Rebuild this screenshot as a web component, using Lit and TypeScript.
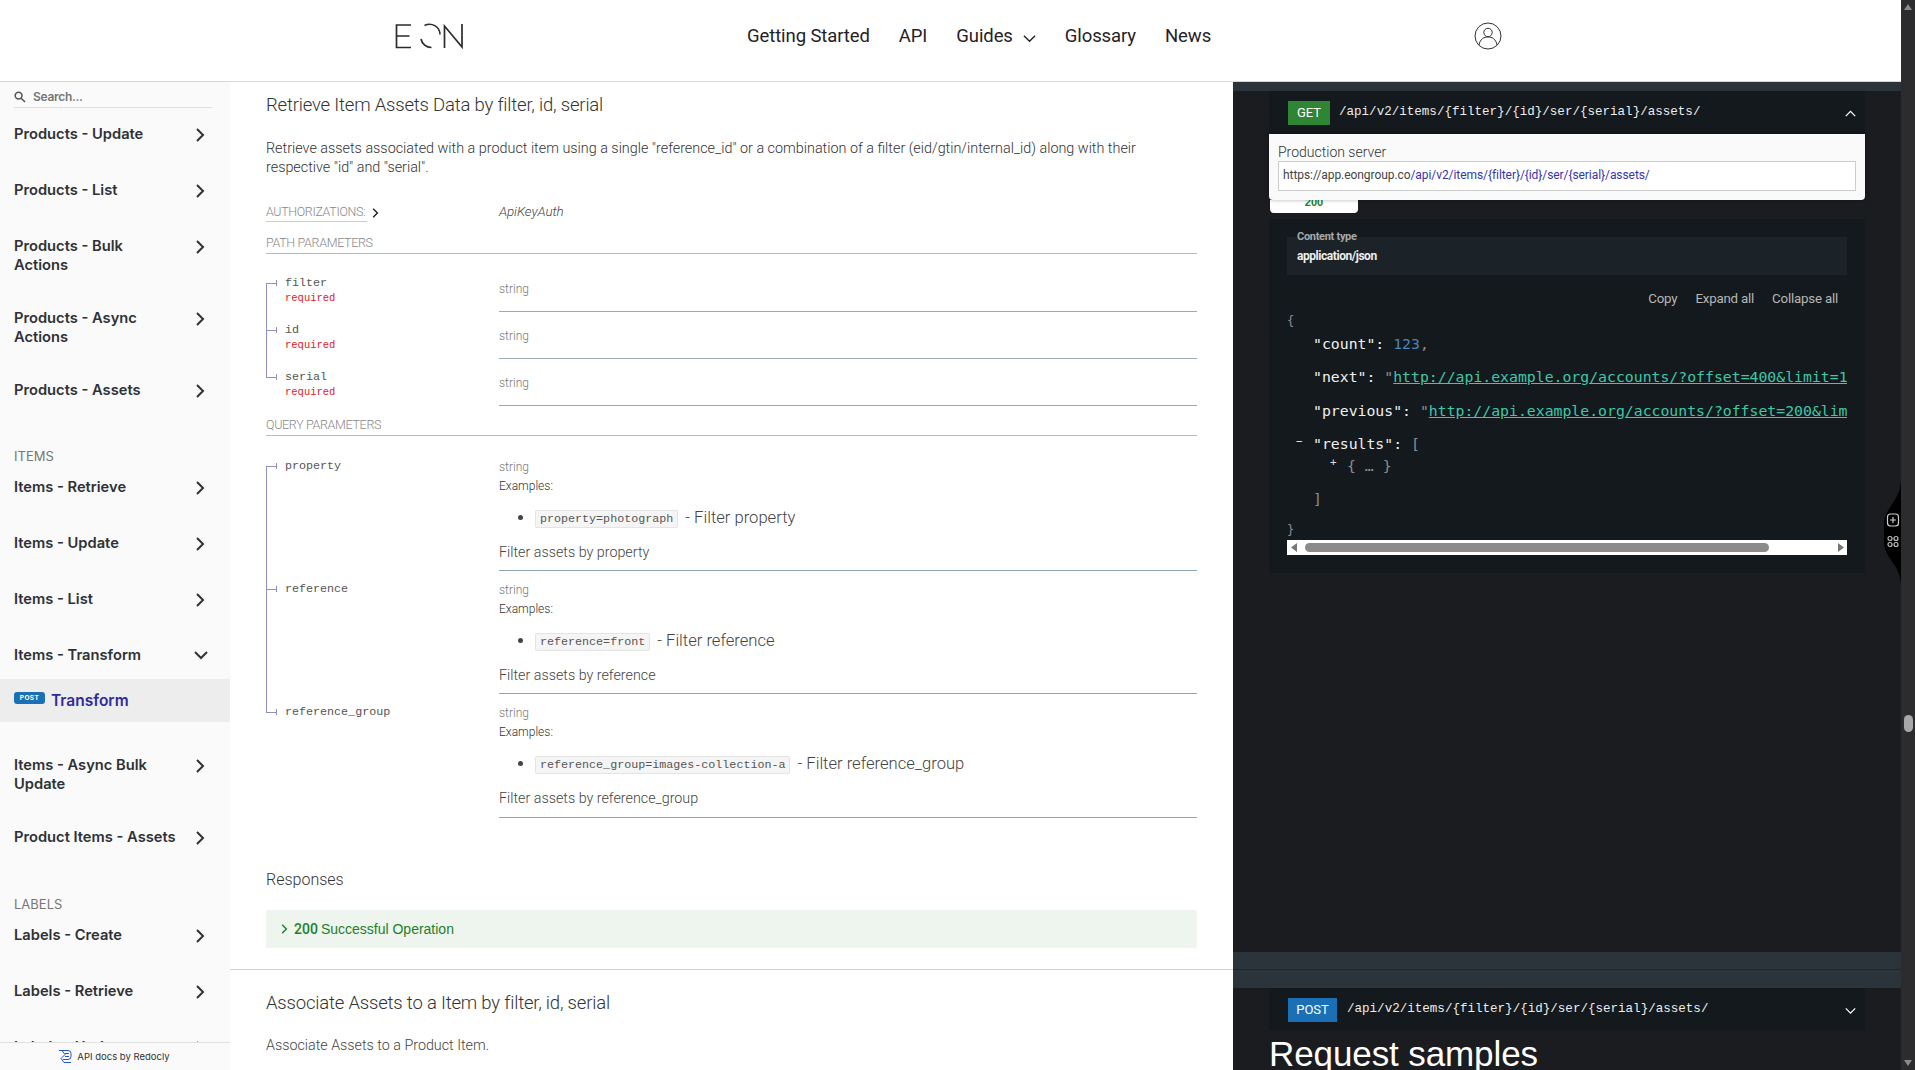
import { LitElement, html, css } from "lit";
import { customElement } from "lit/decorators.js";

type Nav = { kind: "item"; lines: string[]; open?: boolean } | { kind: "label"; text: string; cls?: string } | { kind: "active" };

const NAV: Nav[] = [
  { kind: "item", lines: ["Products - Update"] },
  { kind: "item", lines: ["Products - List"] },
  { kind: "item", lines: ["Products - Bulk", "Actions"] },
  { kind: "item", lines: ["Products - Async", "Actions"] },
  { kind: "item", lines: ["Products - Assets"] },
  { kind: "label", text: "ITEMS" },
  { kind: "item", lines: ["Items - Retrieve"] },
  { kind: "item", lines: ["Items - Update"] },
  { kind: "item", lines: ["Items - List"] },
  { kind: "item", lines: ["Items - Transform"], open: true },
  { kind: "active" },
  { kind: "item", lines: ["Items - Async Bulk", "Update"] },
  { kind: "item", lines: ["Product Items - Assets"] },
  { kind: "label", text: "LABELS", cls: "tall" },
  { kind: "item", lines: ["Labels - Create"] },
  { kind: "item", lines: ["Labels - Retrieve"] },
  { kind: "item", lines: ["Labels - Update"] },
];

const PATH_PARAMS = ["filter", "id", "serial"];
const QUERY_PARAMS = [
  { name: "property", ex: "property=photograph", label: "Filter property", desc: "Filter assets by property" },
  { name: "reference", ex: "reference=front", label: "Filter reference", desc: "Filter assets by reference" },
  { name: "reference_group", ex: "reference_group=images-collection-a", label: "Filter reference_group", desc: "Filter assets by reference_group" },
];

const chevron = (dir: "right" | "down" | "up", cls = "") => {
  const d = dir === "right" ? "M3 1l6 6-6 6" : dir === "down" ? "M1 3l6 6 6-6" : "M1 9l6-6 6 6";
  return html`<svg class="chev ${cls}" viewBox="0 0 14 14" fill="none" stroke="currentColor"><path d=${d}></path></svg>`;
};

@customElement("app-root")
export class AppRoot extends LitElement {
  static styles = css`
    :host { display: block; width: 1915px; height: 1070px; overflow: hidden; position: relative; background: #fff;
      font-family: Roboto, "Liberation Sans", sans-serif; color: #333; }
    * { box-sizing: border-box; }
    .page { display: flex; flex-direction: column; height: 1070px; width: 1901px; }
    header { height: 82px; flex: none; border-bottom: 1px solid #d8d8d8; display: flex; align-items: center; padding: 0 0 15px 395px; background: #fff; }
    .logo { width: 69px; height: 26px; flex: none; margin-top: 6px; }
    nav { display: flex; align-items: center; margin-left: 283px; font-size: 18.5px; letter-spacing: -0.1px; color: #1f2226; margin-top: 6px; }
    nav a { margin-right: 29px; display: flex; align-items: center; }
    nav .g-chev { width: 13px; height: 13px; margin-left: 10px; margin-top: 7px; stroke-width: 1.5; }
    .user { width: 28px; height: 28px; margin-left: 234px; margin-top: 6px; flex: none; }
    .body { display: flex; flex: 1; min-height: 0; }

    aside { width: 230px; flex: none; background: #fafafa; position: relative; overflow: hidden; font-family: Inter, "Liberation Sans", sans-serif; }
    .search { margin: 0 18px 10px 14px; height: 26px; border-bottom: 1px solid #e0e0e0; display: flex; align-items: center; padding-top: 4px; font-size: 12px; font-weight: 600; color: #777; }
    .search svg { width: 12px; height: 12px; margin-right: 7px; }
    .search span { letter-spacing: -0.3px; }
    .item { min-height: 56px; padding: 6.5px 14px 26.5px; display: flex; justify-content: space-between; font-size: 14.7px; font-weight: 600; line-height: 19.5px; color: #2e3136; }
    .item.open { min-height: 40px; padding-bottom: 0; height: 40px; }
    .item .chev { width: 14px; height: 14px; margin: 3.5px 8px 0 0; stroke-width: 2; flex: none; }
    .label { height: 41px; padding: 18px 14px 0; line-height: 17px; font-size: 13px; color: #777; }
    .label.tall { height: 42px; padding-top: 19px; }
    .active { height: 43px; margin-bottom: 27px; background: #ededed; display: flex; align-items: flex-start; padding: 13px 0 0 14px; }
    .post { width: 31px; height: 12px; border-radius: 3px; background: #1a6fb5; color: #fff; font-size: 6.5px; font-weight: 700; text-align: center; line-height: 12px; letter-spacing: .4px; }
    .active b { color: #2f2a9e; font-size: 15.5px; font-weight: 600; margin-left: 6px; line-height: 18px; }
    .foot { position: absolute; left: 0; right: 0; bottom: 0; height: 28px; background: #fafafa; border-top: 1px solid #e2e2e2; display: flex; align-items: center; justify-content: center; font-size: 9.5px; color: #333; padding-right: 2px; }
    .foot svg { width: 15px; height: 15px; margin-right: 4px; }

    main { width: 1003px; flex: none; padding: 0 36px; overflow: hidden; font-weight: 300; }
    h2 { font-weight: 300; font-size: 18.5px; margin: 0; line-height: 24px; color: #333; letter-spacing: -.19px; }
    main > h2:first-child { padding-top: 11px; height: 35px; }
    .desc { font-size: 14.36px; line-height: 19px; margin: 22px 0 0; color: #333; }
    .auth { display: flex; margin-top: 26px; height: 31px; font-size: 12.4px; color: #888; align-items: flex-start; line-height: 18px; letter-spacing: -.3px;}
    .auth u { text-decoration: none; width: 101px; height: 19px; border-bottom: 1px solid #ccc; display: block; white-space: nowrap; }
    .auth .chev { width: 10px; height: 10px; margin: 5px 0 0 4px; color: #222; stroke-width: 2; }
    .auth i { margin-left: 118px; color: #444; font-size: 13.4px; letter-spacing: -.1px; }
    .sect { font-size: 12.5px; color: #888; border-bottom: 1px solid #bbb; height: 20px; line-height: 18px; letter-spacing: -.33px; }
    .s-path { margin: 0 0 11px; }
    .s-query { margin: 10px 0 12px; }
    .row { display: flex; }
    .pname { width: 233px; flex: none; position: relative; padding: 10px 0 0 19px; font: 11.7px/16px "Liberation Mono", monospace; color: #555; }
    .pname::before { content: ""; position: absolute; left: 0; top: 0; bottom: 0; width: 1px; background: #8f8fc4; }
    .row:first-child .pname::before { top: 18px; }
    .row:last-child .pname::before { bottom: auto; height: 18px; }
    .pname::after { content: ""; position: absolute; left: 0; top: 15px; width: 10px; height: 6px; border-right: 1px solid #8f8fc4; background: linear-gradient(#8f8fc4, #8f8fc4) 0 3px / 100% 1px no-repeat; }
    .req { display: block; color: #e0202a; font-size: 10.5px; line-height: 15px; }
    .pval { flex: 1; border-bottom: 1px solid #9aa8b8; font-size: 12px; color: #444; }
    .pt .pval { height: 47px; padding-top: 16px; line-height: 16px; color: #777; }
    .q .pval { height: 123.2px; padding-top: 11px; border-bottom-color: #8fa5b5; }
    .q .pval .t { line-height: 16px; color: #777; }
    .q .pval .e { line-height: 22px; color: #333; }
    .q ul { margin: 9px 0 12px; padding: 0 0 0 36px; height: 24px; font-size: 16.6px; color: #444; line-height: 24px; }
    code { font: 11.7px "Liberation Mono", monospace; color: #555; background: #f5f5f5; border: 1px solid #e4e4e4; border-radius: 2px; padding: 1px 4px; margin-right: 3px; vertical-align: 1px; }
    .q .d { font-size: 14.3px; line-height: 20px; color: #444; }
    h3 { font-weight: 300; font-size: 16px; margin: 52.4px 0 0; line-height: 20px; color: #333; }
    .resp { margin-top: 20px; height: 38px; background: #eef5ef; border-radius: 2px; display: flex; align-items: center; padding-left: 14px; color: #1d8127; font: 14px "Liberation Sans", sans-serif; }
    .resp .chev { width: 10px; height: 12px; margin-right: 4px; stroke-width: 2; }
    .resp b { margin-right: 3px; font-family: Roboto, sans-serif; font-weight: 500; }
    .rule { height: 1px; background: #d0d0d0; margin: 21px -36px 0; }
    .assoc { margin-top: 21px; }
    .assoc + p { font-size: 14.3px; margin: 20px 0 0; line-height: 20px; color: #444; }

    .dark { flex: 1; background: #1b1c1f; position: relative; overflow: hidden; color: #fff; }
    .band { height: 9px; background: #2b343a; }
    .bar { margin: 0 36px; background: #14191d; display: flex; align-items: flex-start; padding: 10px 0 0 19px; height: 43px; font: 12.56px/22px "Liberation Mono", monospace; color: #eee; }
    .bar.p { height: 42px; }
    .badge { height: 24px; font: 13px/24px Roboto, sans-serif; text-align: center; color: #fff; margin-right: 9px; }
    .badge.get { width: 42px; background: #2e8533; }
    .badge.postb { width: 49px; background: #1a6fb5; margin-right: 10px; }
    .bar .path { flex: 1; }
    .bar .chev { width: 11px; height: 11px; margin: 8px 9px 0 0; stroke-width: 1.6; color: #fff; }
    .tabs { height: 85px; position: relative; padding: 66px 0 0 37px; }
    .tab { width: 88px; height: 13px; background: #fff; border-radius: 0 0 4px 4px; color: #1d8127; text-align: center; font: 700 11px/5px "Liberation Sans", sans-serif; overflow: hidden; padding-top: 0; }
    .server { position: absolute; left: 36px; top: 0; width: 596px; height: 66px; background: #fafafa; border-radius: 0 0 4px 4px; padding: 9px 9px 0; color: #333; z-index: 2; box-shadow: 0 0 4px rgba(0,0,0,.3); font-size: 14px; line-height: 18px; font-weight: 300; }
    .server div { height: 30px; margin-top: 0; border: 1px solid #ccc; background: #fff; padding-left: 4px; font-size: 12px; line-height: 27px; color: #444; letter-spacing: -.07px; white-space: nowrap; font-weight: 400; }
    .server span { color: #3535b0; }
    .samples { margin: 0 36px; height: 354px; background: #14191d; padding: 18px 18px 0; position: relative; }
    .ctype { height: 38px; background: #1c2328; position: relative; padding: 11px 10px 0; font: 700 12px/16px Roboto, sans-serif; color: #eee; letter-spacing: -.45px; }
    .ctype small { position: absolute; left: 10px; top: -7px; font-size: 11px; line-height: 14px; color: #a5a9ac; letter-spacing: -.3px; }
    .tools { display: flex; justify-content: flex-end; gap: 18px; margin-top: 15px; padding-right: 9px; height: 18px; font: 13.3px/18px Roboto, sans-serif; color: #b4b6b8; letter-spacing: -.2px; }
    .json { margin-top: 3px; height: 229px; width: 560px; overflow: hidden; font: 14.8px/20px "DejaVu Sans Mono", monospace; color: #f0f0f0; }
    .jl { white-space: nowrap; position: relative; }
    .json a { color: #3fc8a8; text-decoration: underline; }
    .json .n { color: #4a85b8; }
    .json .g { color: #8c8f92; }
    .json .pm { position: absolute; font-size: 11px; color: #ddd; }
    .json .sm { font-size: 12px; }
    .hs { height: 15px; width: 560px; background: #fff; position: relative; display: flex; align-items: center; padding-left: 18px; }
    .hs i { display: block; width: 464px; height: 9px; background: #8b8b8b; border-radius: 5px; }
    .hs svg { position: absolute; top: 3px; width: 8px; height: 9px; fill: #777; }
    .lower { margin-top: 379px; height: 36px; background: #2b343a; position: relative; }
    .lower::after { content: ""; position: absolute; left: 0; right: 0; top: 17px; height: 1px; background: #20272b; }
    .req-s { font: 35px/44px "Liberation Sans", sans-serif; color: #fff; margin: 2px 0 0 36px; letter-spacing: -.1px; white-space: nowrap; }

    .vbar { position: absolute; right: 0; top: 0; bottom: 0; width: 14px; background: #2c2c2e; }
    .vbar i { position: absolute; left: 3px; top: 715px; width: 9px; height: 17px; border-radius: 5px; background: #a8a8a8; }
    .vbar svg { position: absolute; left: 2px; width: 10px; height: 8px; fill: #8a8a8a; }
    .wedge { position: absolute; left: 1884px; top: 480px; width: 17px; height: 104px; }
  `;

  private renderNav(n: Nav) {
    if (n.kind === "label") return html`<div class="label ${n.cls ?? ""}">${n.text}</div>`;
    if (n.kind === "active") return html`<div class="active"><span class="post">POST</span><b>Transform</b></div>`;
    return html`<div class="item ${n.open ? "open" : ""}">
      <span>${n.lines.map((l, i) => html`${i ? html`<br />` : ""}${l}`)}</span>
      ${chevron(n.open ? "down" : "right")}
    </div>`;
  }

  render() {
    return html`
      <div class="page">
        <header>
          <svg class="logo" viewBox="0 0 69 26" fill="none" stroke="#2b2b2b" stroke-width="1.7">
            <path d="M16 2H1.5V24.5H16M1.5 13H14.5"></path>
            <path d="M26 16a10.5 10.5 0 0 0 10.5 8.5"></path>
            <path d="M29.5 2.5a10.5 10.5 0 0 1 15.5 9" stroke-width="1.5"></path>
            <path d="M49.5 25V3L67 24V1"></path>
          </svg>
          <nav>
            <a>Getting Started</a><a>API</a>
            <a>Guides${chevron("down", "g-chev")}</a>
            <a>Glossary</a><a>News</a>
          </nav>
          <svg class="user" viewBox="0 0 28 28" fill="none" stroke="#333" stroke-width="1">
            <circle cx="14" cy="14" r="13"></circle>
            <circle cx="14" cy="10.5" r="4.2"></circle>
            <path d="M5 23c1-6 5-8 9-8s8 2 9 8"></path>
          </svg>
        </header>
        <div class="body">
          <aside>
            <div class="search">
              <svg viewBox="0 0 12 12" fill="none" stroke="#555" stroke-width="1.6"><circle cx="4.6" cy="4.6" r="3.4"></circle><path d="M7.2 7.2L11 11"></path></svg>
              <span>Search...</span>
            </div>
            ${NAV.map((n) => this.renderNav(n))}
            <div class="foot">
              <svg viewBox="0 0 15 15" fill="none" stroke="#2456c9" stroke-width="1"><path d="M1 1.5h9a3 3 0 0 1 3 3v3a3 3 0 0 1-3 3H5M4 1.5l3 4-4 4 3 4H13M7 4.5h4M7 7.5h4"></path></svg>
              <span>API docs by Redocly</span>
            </div>
          </aside>
          <main>
            <h2>Retrieve Item Assets Data by filter, id, serial</h2>
            <p class="desc">Retrieve assets associated with a product item using a single "reference_id" or a combination of a filter (eid/gtin/internal_id) along with their<br />respective "id" and "serial".</p>
            <div class="auth"><u>AUTHORIZATIONS:</u>${chevron("right")}<i>ApiKeyAuth</i></div>
            <div class="sect s-path">PATH PARAMETERS</div>
            <div>
              ${PATH_PARAMS.map((p) => html`<div class="row pt"><div class="pname">${p}<span class="req">required</span></div><div class="pval">string</div></div>`)}
            </div>
            <div class="sect s-query">QUERY PARAMETERS</div>
            <div>
              ${QUERY_PARAMS.map((p) => html`<div class="row q"><div class="pname">${p.name}</div><div class="pval">
                <div class="t">string</div><div class="e">Examples:</div>
                <ul><li><code>${p.ex}</code> - ${p.label}</li></ul>
                <div class="d">${p.desc}</div>
              </div></div>`)}
            </div>
            <h3>Responses</h3>
            <div class="resp">${chevron("right")}<b>200</b> Successful Operation</div>
            <div class="rule"></div>
            <h2 class="assoc">Associate Assets to a Item by filter, id, serial</h2>
            <p>Associate Assets to a Product Item.</p>
          </main>
          <section class="dark">
            <div class="band"></div>
            <div class="bar"><span class="badge get">GET</span><span class="path">/api/v2/items/{filter}/{id}/ser/{serial}/assets/</span>${chevron("up")}</div>
            <div class="tabs">
              <div class="server">Production server<div>https://app.eongroup.co<span>/api/v2/items/{filter}/{id}/ser/{serial}/assets/</span></div></div>
              <div class="tab">200</div>
            </div>
            <div class="samples">
              <div class="ctype"><small>Content type</small>application/json</div>
              <div class="tools"><span>Copy</span><span>Expand all</span><span>Collapse all</span></div>
              <div class="json">
                <div class="jl g sm">{</div>
                <div class="jl" style="margin-top:3px;padding-left:26px">"count": <span class="n">123</span><span class="g">,</span></div>
                <div class="jl" style="margin-top:13px;padding-left:26px">"next": <span class="g">"</span><a>http://api.example.org/accounts/?offset=400&amp;limit=1</a></div>
                <div class="jl" style="margin-top:14px;padding-left:26px">"previous": <span class="g">"</span><a>http://api.example.org/accounts/?offset=200&amp;lim</a></div>
                <div class="jl" style="margin-top:13px;padding-left:26px"><span class="pm" style="left:9px;top:-2px">−</span>"results": <span class="g">[</span></div>
                <div class="jl g" style="margin-top:2px;padding-left:60px"><span class="pm" style="left:43px;top:-3px">+</span>{ … }</div>
                <div class="jl g" style="margin-top:13px;padding-left:26px">]</div>
                <div class="jl g sm" style="margin-top:11px">}</div>
              </div>
              <div class="hs"><i></i>
                <svg style="left:3px" viewBox="0 0 8 9"><path d="M7 0v9L1 4.5z"></path></svg>
                <svg style="right:2px" viewBox="0 0 8 9"><path d="M1 0v9l6-4.5z"></path></svg>
              </div>
            </div>
            <div class="lower"></div>
            <div class="bar p"><span class="badge postb">POST</span><span class="path">/api/v2/items/{filter}/{id}/ser/{serial}/assets/</span>${chevron("down")}</div>
            <div class="req-s">Request samples</div>
          </section>
        </div>
      </div>
      <div class="vbar">
        <svg style="top:3px" viewBox="0 0 10 8"><path d="M5 1l4 6H1z"></path></svg>
        <i></i>
        <svg style="bottom:3px" viewBox="0 0 10 8"><path d="M5 7l4-6H1z"></path></svg>
      </div>
      <svg class="wedge" viewBox="0 0 17 104" fill="none">
        <path d="M17 0C16 22 0 28 0 44V62C0 78 16 84 17 104Z" fill="#000"></path>
        <rect x="3.5" y="34" width="11" height="12" rx="3" stroke="#ccc" stroke-width="1.2"></rect>
        <path d="M9 37v6M6 40h6" stroke="#ccc" stroke-width="1.2"></path>
        <g stroke="#bbb" stroke-width="1.2">
          <circle cx="6" cy="58.5" r="2"></circle><circle cx="12" cy="58.5" r="2"></circle>
          <circle cx="6" cy="64.5" r="2"></circle><circle cx="12" cy="64.5" r="2"></circle>
        </g>
      </svg>
    `;
  }
}
